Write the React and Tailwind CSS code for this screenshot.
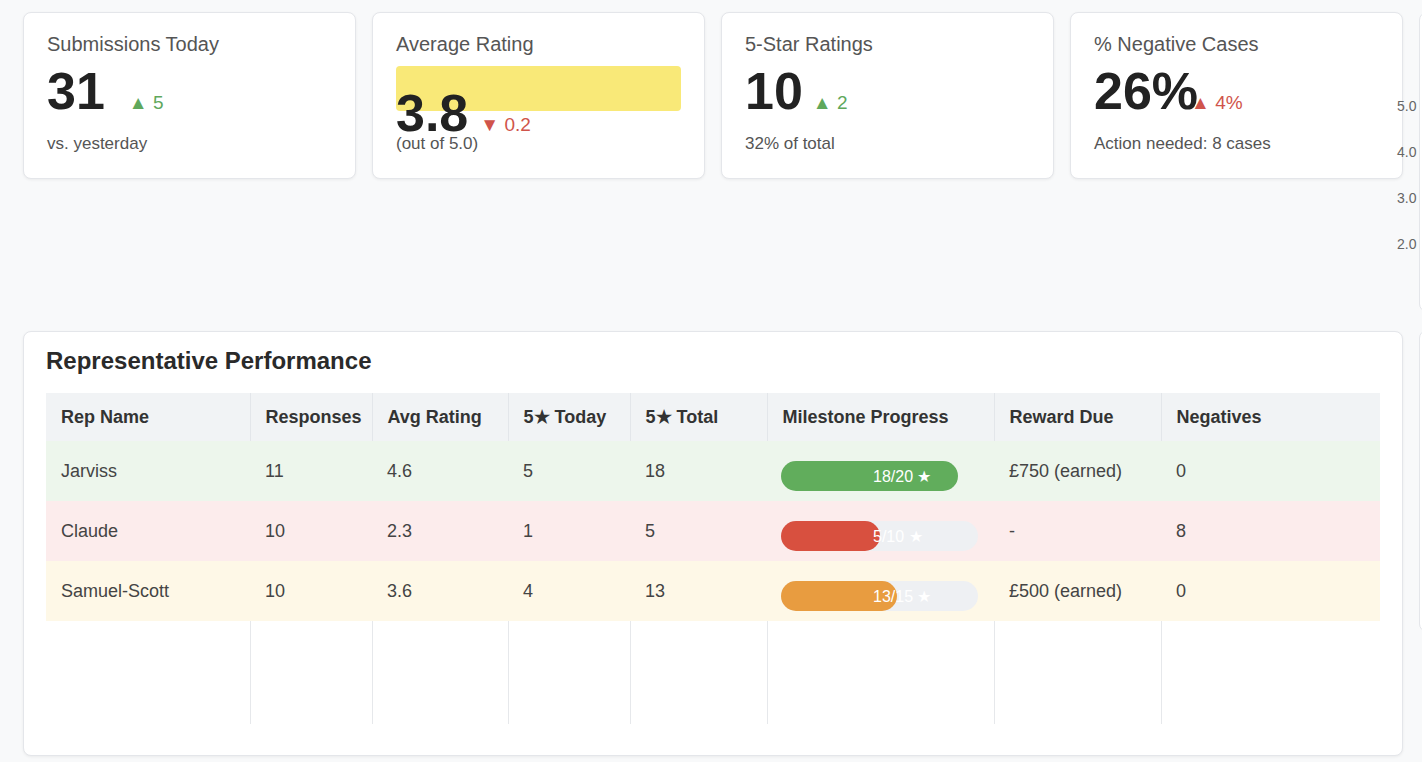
import React from "react";

const font = { fontFamily: '"Liberation Sans", Arial, sans-serif' };

const kpis = [
  { title: "Submissions Today", value: "31", delta: "▲ 5", good: true, gap: "ml-[24px]", sub: "vs. yesterday" },
  { title: "Average Rating", value: "3.8", delta: "▼ 0.2", good: false, gap: "ml-[12px]", sub: "(out of 5.0)", highlight: true },
  { title: "5-Star Ratings", value: "10", delta: "▲ 2", good: true, gap: "ml-[10px]", sub: "32% of total" },
  { title: "% Negative Cases", value: "26%", delta: "▲ 4%", good: false, gap: "-ml-[7px]", sub: "Action needed: 8 cases" },
];

const reps = [
  { name: "Jarviss", responses: 11, avg: "4.6", today: 5, total: 18, label: "18/20 ★", pct: 90, fill: "bg-[#61ad5c]", row: "bg-[#edf6ec]", reward: "£750 (earned)", neg: 0, track: "bg-transparent" },
  { name: "Claude", responses: 10, avg: "2.3", today: 1, total: 5, label: "5/10 ★", pct: 50, fill: "bg-[#d8503f]", row: "bg-[#fcecec]", reward: "-", neg: 8, track: "bg-[#eef0f3]" },
  { name: "Samuel-Scott", responses: 10, avg: "3.6", today: 4, total: 13, label: "13/15 ★", pct: 59, fill: "bg-[#e89c40]", row: "bg-[#fef8e7]", reward: "£500 (earned)", neg: 0, track: "bg-[#eef0f3]" },
];

const cols = [
  { h: "Rep Name", w: "w-[204px]" },
  { h: "Responses", w: "w-[122px]" },
  { h: "Avg Rating", w: "w-[136px]" },
  { h: "5★ Today", w: "w-[122px]" },
  { h: "5★ Total", w: "w-[137px]" },
  { h: "Milestone Progress", w: "w-[227px]" },
  { h: "Reward Due", w: "w-[167px]" },
  { h: "Negatives", w: "" },
];

function KpiCard({ k }) {
  const deltaColor = k.good ? "text-[#5fa85c]" : "text-[#d0544b]";
  return (
    <div className="w-[333px] h-[167px] shrink-0 bg-white rounded-lg border border-[#e4e6ea] shadow-[0_1px_3px_rgba(0,0,0,0.06)] pt-[19px] px-[23px]">
      <div className="text-[20px] leading-[24px] text-[#555]">{k.title}</div>
      {k.highlight ? (
        <>
          <div className="mt-[10px] h-[45px] w-full rounded bg-[#f9e978]" />
          <div className="-mt-[24px] flex items-baseline">
            <span className="text-[52px] leading-none font-bold text-[#222]">{k.value}</span>
            <span className={`${k.gap} text-[19px] ${deltaColor}`}>{k.delta}</span>
          </div>
          <div className="-mt-[6px] text-[17px] leading-[20px] text-[#555]">{k.sub}</div>
        </>
      ) : (
        <>
          <div className="mt-[9px] flex items-baseline">
            <span className="text-[52px] leading-none font-bold text-[#222]">{k.value}</span>
            <span className={`${k.gap} text-[19px] ${deltaColor}`}>{k.delta}</span>
          </div>
          <div className="mt-4 text-[17px] leading-[20px] text-[#555]">{k.sub}</div>
        </>
      )}
    </div>
  );
}

function Progress({ r }) {
  return (
    <div className={`relative mt-[20px] h-[30px] w-[197px] rounded-full ${r.track}`}>
      <div className={`h-full rounded-full ${r.fill}`} style={{ width: `${r.pct}%` }} />
      <span className="absolute left-[92px] top-[6px] text-[16px] leading-[20px] text-white whitespace-nowrap">{r.label}</span>
    </div>
  );
}

export default function App() {
  return (
    <div className="w-screen h-screen overflow-hidden bg-[#f8f9fa]" style={font}>
      <div className="flex gap-4 pl-[23px] pt-[12px]">
        <div className="w-[1380px] shrink-0 flex flex-col gap-[18px]">
          <div className="h-[301px] flex gap-4 items-start">
            {kpis.map(k => (
              <KpiCard key={k.title} k={k} />
            ))}
          </div>

          <div className="h-[425px] bg-white rounded-lg border border-[#e4e6ea] shadow-[0_1px_3px_rgba(0,0,0,0.06)] px-[22px] pt-[15px]">
            <h2 className="text-[24px] leading-[28px] font-bold text-[#2a2a2a] mb-[18px]">Representative Performance</h2>
            <table className="w-full table-fixed border-collapse text-left">
              <thead>
                <tr className="bg-[#f1f3f5]">
                  {cols.map((c, i) => (
                    <th
                      key={c.h}
                      className={`${c.w} h-[48px] pl-[15px] text-[18px] font-bold text-[#333] ${i < cols.length - 1 ? "border-r border-[#e3e6ea]" : ""}`}
                    >
                      {c.h}
                    </th>
                  ))}
                </tr>
              </thead>
              <tbody>
                {reps.map(r => (
                  <tr key={r.name} className={`${r.row} text-[18px] text-[#444]`}>
                    <td className="h-[60px] pl-[15px]">{r.name}</td>
                    <td className="pl-[15px]">{r.responses}</td>
                    <td className="pl-[15px]">{r.avg}</td>
                    <td className="pl-[15px]">{r.today}</td>
                    <td className="pl-[15px]">{r.total}</td>
                    <td className="pl-[14px] align-top">
                      <Progress r={r} />
                    </td>
                    <td className="pl-[15px]">{r.reward}</td>
                    <td className="pl-[15px]">{r.neg}</td>
                  </tr>
                ))}
                <tr>
                  {cols.map((c, i) => (
                    <td key={c.h} className={`h-[103px] ${i < cols.length - 1 ? "border-r border-[#e6e8eb]" : ""}`} />
                  ))}
                </tr>
              </tbody>
            </table>
          </div>
        </div>

        <div className="w-[300px] shrink-0 flex flex-col gap-[18px]">
          <div className="relative h-[300px] bg-white rounded-lg border border-[#e4e6ea]">
            <div className="absolute left-[-23px] top-[85px] flex flex-col gap-[30px] text-[14px] leading-[16px] text-[#666]">
              <span>5.0</span>
              <span>4.0</span>
              <span>3.0</span>
              <span>2.0</span>
            </div>
          </div>
          <div className="h-[302px] bg-white rounded-lg border border-[#e4e6ea]" />
        </div>
      </div>
    </div>
  );
}
